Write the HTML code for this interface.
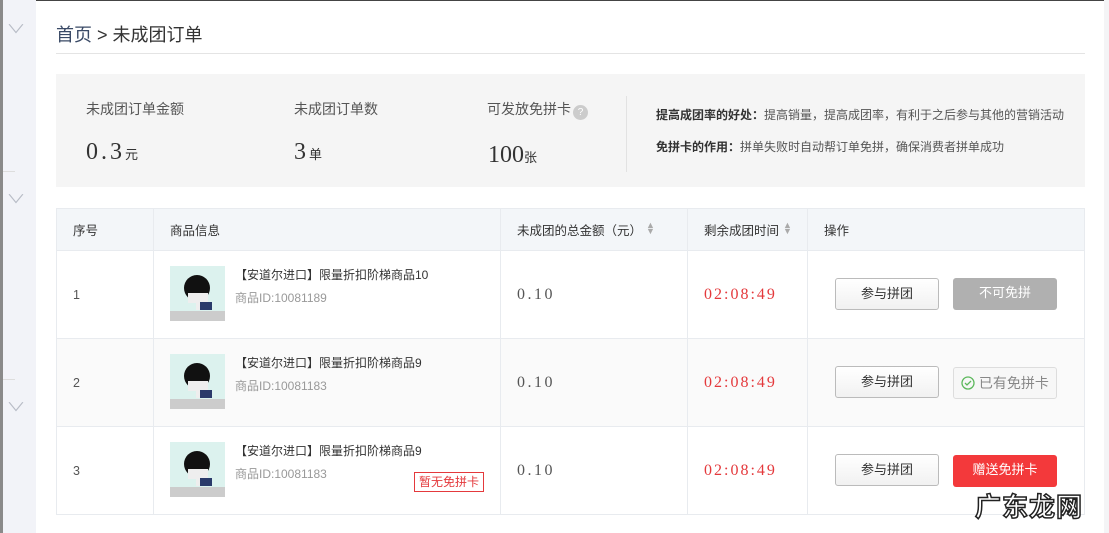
<!DOCTYPE html>
<html><head><meta charset="utf-8"><style>
*{margin:0;padding:0;box-sizing:border-box}
body{width:1109px;height:533px;overflow:hidden;background:#fff;font-family:"Liberation Sans","Noto Sans CJK SC",sans-serif;color:#333;position:relative}
.a{position:absolute;white-space:nowrap}
.side{left:0;top:0;width:36px;height:533px;background:#f2f3f8;border-left:3px solid #8a8a8a}
.topl{left:0;top:0;width:1109px;height:1px;background:#444}
.rs{left:1104px;top:0;width:5px;height:533px;background:#f4f4f6}
.chev{color:#b8bcc6;font-size:12px;transform:scaleX(1.6)}
.sep{height:1px;background:#e4e4e4}
.stats{left:56px;top:74px;width:1029px;height:113px;background:#f5f5f5}
.lbl{font-size:14px;color:#555}
.big{font-family:"Liberation Serif","Noto Serif CJK SC",serif;font-size:24px;color:#333;letter-spacing:3px}
.big small{font-size:13px;letter-spacing:0;font-family:"Liberation Sans","Noto Sans CJK SC",sans-serif}
.tip{font-size:12px;color:#555}
.tip b{color:#333}
table{position:absolute;left:56px;top:208px;width:1029px;border-collapse:collapse;font-size:12.5px}
td,th{border:1px solid #e8ebef;text-align:left;font-weight:normal;vertical-align:middle}
th{background:#f3f6f9;height:42px;color:#333}
td{height:88px;color:#555}
tr.g td{background:#fafafa}
th:first-child,td:first-child{padding-left:16px}
.pi{position:relative;padding-left:16px}
.nm{position:absolute;left:81px;top:15px;font-size:12px;color:#333}
.id{position:absolute;left:81px;top:38px;font-size:12px;color:#999}
.amt{font-family:"Liberation Serif","Noto Serif CJK SC",serif;font-size:16px;color:#555;padding-left:16px;letter-spacing:2.5px}
.tm{font-family:"Liberation Serif",serif;font-size:16px;color:#e4393c;padding-left:16px;letter-spacing:2px}
.srt{color:#aaa;font-size:9px;display:inline-block;line-height:6px;vertical-align:1px;margin-left:4px}
.btn{position:absolute;height:32px;line-height:30px;text-align:center;font-size:13px;border-radius:3px}
.b1{width:104px;border:1px solid #bbb;background:linear-gradient(#fff,#f1f1f1);color:#333}
.b2{width:104px;background:#b0b0b0;color:#fff}
.b3{width:104px;border:1px solid #ddd;background:#f7f7f7;color:#888}
.b4{width:104px;background:#f3393b;color:#fff}
</style></head><body>
<div class="a topl"></div>
<div class="a side"></div>
<div class="a chev" style="left:10px;top:20px">∨</div>
<div class="a chev" style="left:10px;top:190px">∨</div>
<div class="a chev" style="left:10px;top:398px">∨</div>
<div class="a" style="left:3px;top:171px;width:12px;height:1px;background:#ddd"></div>
<div class="a" style="left:3px;top:379px;width:12px;height:1px;background:#ddd"></div>
<div class="a rs"></div>

<div class="a" style="left:56px;top:21px;font-size:18px;color:#333"><span style="color:#3a4a66">首页</span> &gt; 未成团订单</div>
<div class="a sep" style="left:56px;top:53px;width:1029px"></div>

<div class="a stats"></div>
<div class="a lbl" style="left:86px;top:99px">未成团订单金额</div>
<div class="a big" style="left:86px;top:139px">0.3<small>元</small></div>
<div class="a lbl" style="left:294px;top:99px">未成团订单数</div>
<div class="a big" style="left:294px;top:139px">3<small>单</small></div>
<div class="a lbl" style="left:487px;top:99px">可发放免拼卡<span style="display:inline-block;width:15px;height:15px;border-radius:50%;background:#ccc;color:#fff;font-size:10px;text-align:center;line-height:15px;vertical-align:-1px;margin-left:2px">?</span></div>
<div class="a big" style="left:488px;top:142px;letter-spacing:0">100<small>张</small></div>
<div class="a" style="left:626px;top:96px;width:1px;height:76px;background:#e2e2e2"></div>
<div class="a tip" style="left:656px;top:106px"><b>提高成团率的好处：</b>提高销量，提高成团率，有利于之后参与其他的营销活动</div>
<div class="a tip" style="left:656px;top:138px"><b>免拼卡的作用：</b>拼单失败时自动帮订单免拼，确保消费者拼单成功</div>

<table>
<tr><th style="width:97px">序号</th><th style="width:347px;padding-left:16px">商品信息</th><th style="width:187px;padding-left:16px">未成团的总金额（元）<span class="srt">▲<br>▼</span></th><th style="width:120px;padding-left:16px">剩余成团时间<span class="srt">▲<br>▼</span></th><th style="padding-left:16px">操作</th></tr>
<tr><td>1</td><td class="pi"><div class="nm">【安道尔进口】限量折扣阶梯商品10</div><div class="id">商品ID:10081189</div></td><td class="amt">0.10</td><td class="tm">02:08:49</td><td></td></tr>
<tr class="g"><td>2</td><td class="pi"><div class="nm">【安道尔进口】限量折扣阶梯商品9</div><div class="id">商品ID:10081183</div></td><td class="amt">0.10</td><td class="tm">02:08:49</td><td></td></tr>
<tr><td>3</td><td class="pi"><div class="nm">【安道尔进口】限量折扣阶梯商品9</div><div class="id">商品ID:10081183</div><div style="position:absolute;left:260px;top:45px;border:1px solid #e4393c;color:#e4393c;font-size:12px;padding:0 4px;line-height:18px">暂无免拼卡</div></td><td class="amt">0.10</td><td class="tm">02:08:49</td><td></td></tr>
</table>

<svg class="a" style="left:170px;top:266px" width="55" height="55"><rect width="55" height="55" fill="#dcf2ee"/><rect y="45" width="55" height="10" fill="#ccc"/><rect x="26" y="30" width="12" height="14" fill="#eee"/><circle cx="27" cy="22" r="13" fill="#111"/><rect x="18" y="27" width="20" height="10" fill="#eee"/><rect x="30" y="36" width="12" height="8" fill="#2a3a6a"/></svg>
<svg class="a" style="left:170px;top:354px" width="55" height="55"><rect width="55" height="55" fill="#dcf2ee"/><rect y="45" width="55" height="10" fill="#ccc"/><rect x="26" y="30" width="12" height="14" fill="#eee"/><circle cx="27" cy="22" r="13" fill="#111"/><rect x="18" y="27" width="20" height="10" fill="#eee"/><rect x="30" y="36" width="12" height="8" fill="#2a3a6a"/></svg>
<svg class="a" style="left:170px;top:442px" width="55" height="55"><rect width="55" height="55" fill="#dcf2ee"/><rect y="45" width="55" height="10" fill="#ccc"/><rect x="26" y="30" width="12" height="14" fill="#eee"/><circle cx="27" cy="22" r="13" fill="#111"/><rect x="18" y="27" width="20" height="10" fill="#eee"/><rect x="30" y="36" width="12" height="8" fill="#2a3a6a"/></svg>

<div class="a btn b1" style="left:835px;top:278px">参与拼团</div>
<div class="a btn b2" style="left:953px;top:278px">不可免拼</div>
<div class="a btn b1" style="left:835px;top:366px">参与拼团</div>
<div class="a btn b3" style="left:953px;top:367px;font-size:14px"><svg width="14" height="14" style="vertical-align:-2px"><circle cx="7" cy="7" r="6" fill="none" stroke="#5cb85c" stroke-width="1.3"/><path d="M4 7l2 2 4-4" fill="none" stroke="#5cb85c" stroke-width="1.3"/></svg> 已有免拼卡</div>
<div class="a btn b1" style="left:835px;top:454px">参与拼团</div>
<div class="a btn b4" style="left:953px;top:455px">赠送免拼卡</div>
<div class="a" style="left:975px;top:487px;font-size:26px;font-weight:bold;color:#fff;-webkit-text-stroke:1.5px #222;letter-spacing:1px">广东龙网</div>
</body></html>
